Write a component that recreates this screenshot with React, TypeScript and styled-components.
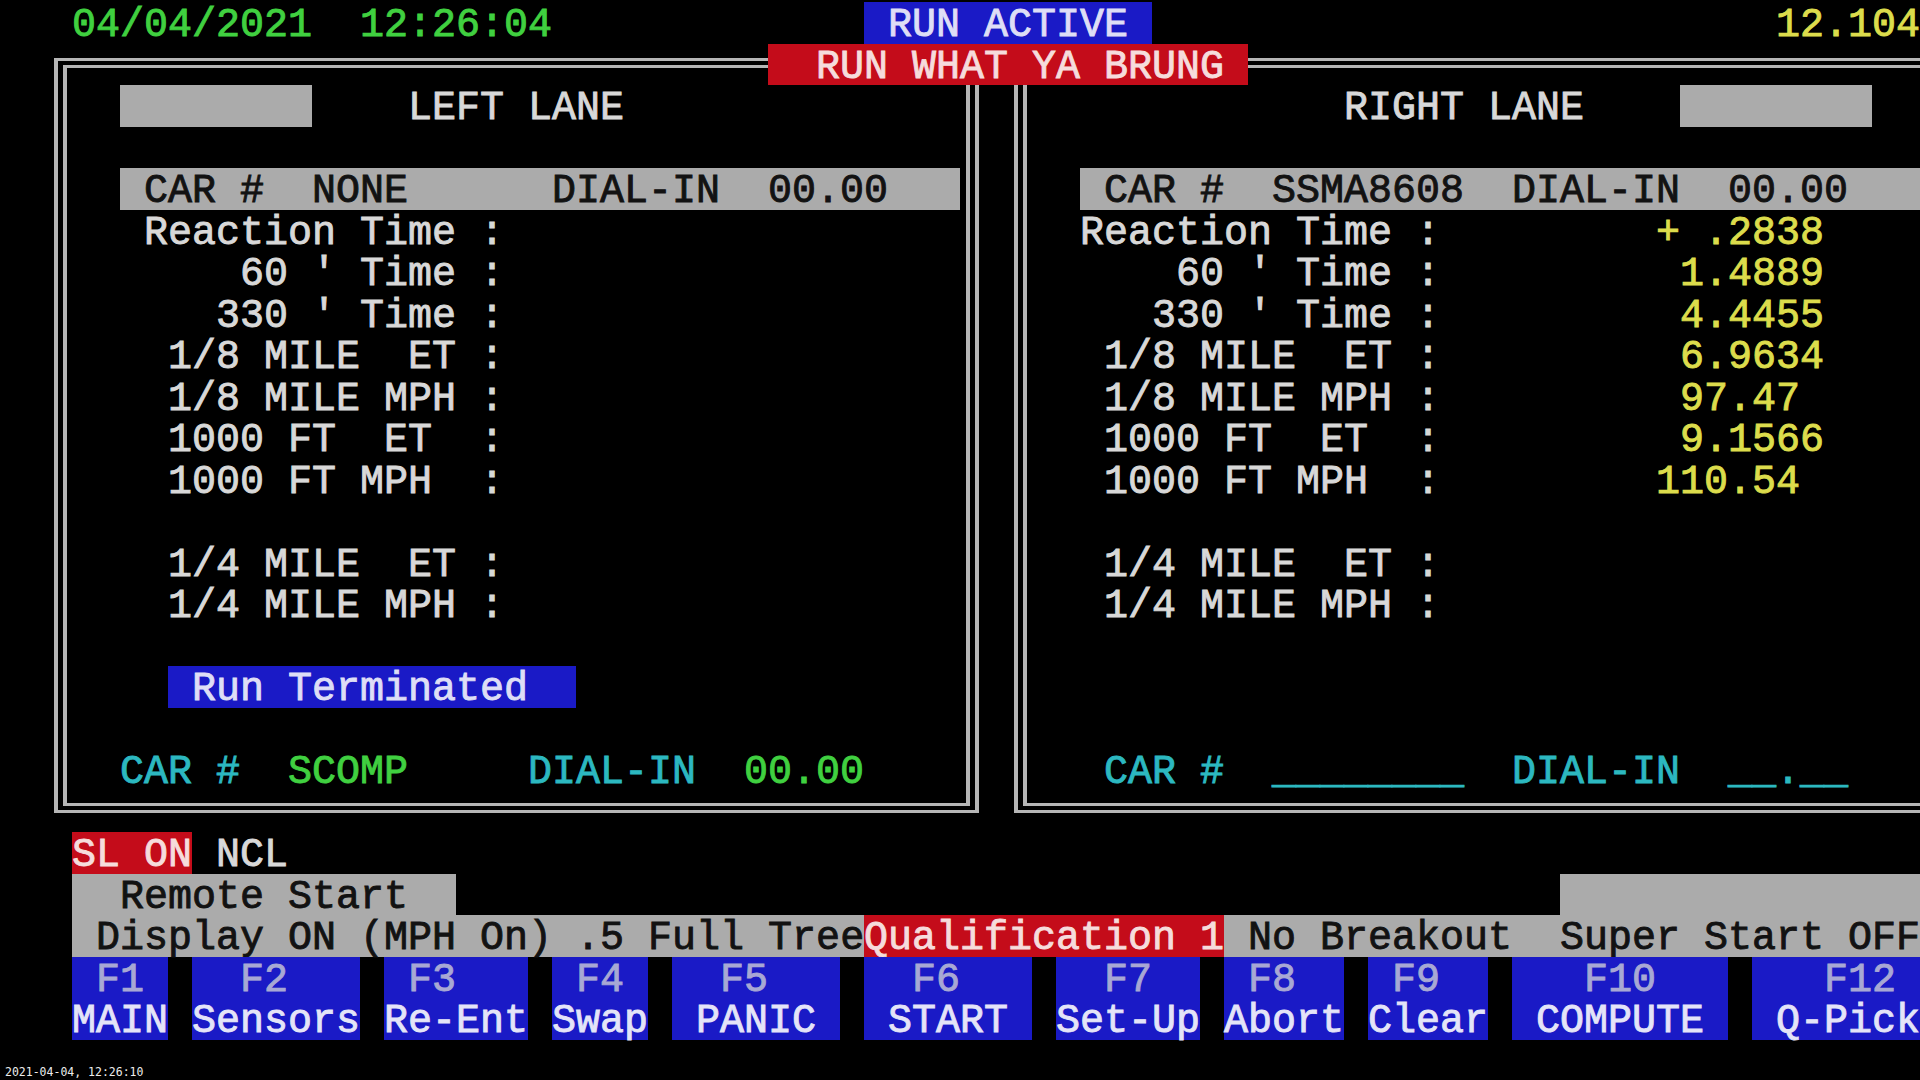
import React from "react";
import styled, { createGlobalStyle, css } from "styled-components";

const GlobalStyle = createGlobalStyle`
  html, body {
    margin: 0;
    padding: 0;
    background: #000;
    overflow: hidden;
  }
  #root {
    width: 1920px;
    height: 1080px;
  }
`;

type Tone = "label" | "green" | "cyan" | "yellow" | "gray" | "blue" | "red";

const FG: Record<Tone, string> = {
  label: "#d8d8d8",
  green: "#40d040",
  cyan: "#2cb8c0",
  yellow: "#dcdc4c",
  gray: "#121212",
  blue: "#dedef6",
  red: "#f6dcdc",
};

const BG: Record<Tone, string> = {
  label: "transparent",
  green: "transparent",
  cyan: "transparent",
  yellow: "transparent",
  gray: "#ababab",
  blue: "#1a1ac6",
  red: "#c40c1a",
};

type Place = { $col: number; $row: number; $span?: number; $rows?: number };

const place = css<Place>`
  grid-column: ${(p) => p.$col + 1} / span ${(p) => p.$span ?? 1};
  grid-row: ${(p) => p.$row + 1} / span ${(p) => p.$rows ?? 1};
`;

const Terminal = styled.main`
  width: 1920px;
  height: 1080px;
  overflow: hidden;
  background: #000;
  display: flex;
  flex-direction: column;
`;

const Screen = styled.div`
  display: grid;
  grid-template-columns: repeat(81, 24px);
  grid-template-rows: repeat(25, 41.5px);
  padding-top: 2px;
  font-family: "Liberation Mono", "DejaVu Sans Mono", monospace;
  font-size: 40px;
  line-height: 41.5px;
  white-space: pre;
  -webkit-text-stroke: 0.9px currentColor;
`;

const Frame = styled.div<Place>`
  ${place};
  margin: 14px 5px 19px 6px;
  border-style: double;
  border-color: #b6b6b6;
  border-width: 10px 13px;
`;

const Text = styled.span<Place & { $tone: Tone }>`
  ${place};
  display: block;
  box-sizing: border-box;
  padding-top: 3px;
  color: ${(p) => FG[p.$tone]};
`;

const Bar = styled.div<Place & { $tone: Tone }>`
  ${place};
  box-sizing: border-box;
  padding-top: 3px;
  color: ${(p) => FG[p.$tone]};
  background: ${(p) => BG[p.$tone]};
`;

const FnKey = styled.div<Place>`
  ${place};
  box-sizing: border-box;
  padding-top: 3px;
  background: ${BG.blue};
  display: grid;
  grid-template-rows: 41.5px 41.5px;
`;

const KeyNum = styled.span`
  color: #a8a8d4;
`;

const KeyName = styled.span`
  color: #e4e4f8;
`;

const Stamp = styled.div`
  margin-top: 25px;
  padding-left: 5px;
  font-family: "DejaVu Sans Mono", monospace;
  font-size: 11.5px;
  line-height: 14px;
  color: #ececec;
  white-space: pre;
`;

const T = ({ col, row, tone, children }: { col: number; row: number; tone: Tone; children: string }) => (
  <Text $col={col} $row={row} $span={children.length} $tone={tone}>
    {children}
  </Text>
);

const B = ({ col, row, tone, children }: { col: number; row: number; tone: Tone; children: string }) => (
  <Bar $col={col} $row={row} $span={children.length} $tone={tone}>
    {children}
  </Bar>
);

const labels: [number, string][] = [
  [5, "Reaction Time :"],
  [6, "    60 ' Time :"],
  [7, "   330 ' Time :"],
  [8, " 1/8 MILE  ET :"],
  [9, " 1/8 MILE MPH :"],
  [10, " 1000 FT  ET  :"],
  [11, " 1000 FT MPH  :"],
  [13, " 1/4 MILE  ET :"],
  [14, " 1/4 MILE MPH :"],
];

const readings: [number, number, string][] = [
  [5, 69, "+ .2838"],
  [6, 70, "1.4889"],
  [7, 70, "4.4455"],
  [8, 70, "6.9634"],
  [9, 70, "97.47"],
  [10, 70, "9.1566"],
  [11, 69, "110.54"],
];

const keys = [
  { col: 3, w: 4, num: " F1", name: "MAIN" },
  { col: 8, w: 7, num: "  F2", name: "Sensors" },
  { col: 16, w: 6, num: " F3", name: "Re-Ent" },
  { col: 23, w: 4, num: " F4", name: "Swap" },
  { col: 28, w: 7, num: "  F5", name: " PANIC" },
  { col: 36, w: 7, num: "  F6", name: " START" },
  { col: 44, w: 6, num: "  F7", name: "Set-Up" },
  { col: 51, w: 5, num: " F8", name: "Abort" },
  { col: 57, w: 5, num: " F9", name: "Clear" },
  { col: 63, w: 9, num: "   F10", name: " COMPUTE" },
  { col: 73, w: 7, num: "   F12", name: " Q-Pick" },
];

export default function App() {
  return (
    <>
      <GlobalStyle />
      <Terminal>
        <Screen>
          <Frame $col={2} $row={1} $span={39} $rows={19} />
          <Frame $col={42} $row={1} $span={39} $rows={19} />

          <T col={3} row={0} tone="green">04/04/2021  12:26:04</T>
          <B col={36} row={0} tone="blue"> RUN ACTIVE </B>
          <T col={74} row={0} tone="yellow">12.104</T>

          <B col={32} row={1} tone="red">  RUN WHAT YA BRUNG </B>

          <B col={5} row={2} tone="gray">{"        "}</B>
          <T col={17} row={2} tone="label">LEFT LANE</T>
          <T col={56} row={2} tone="label">RIGHT LANE</T>
          <B col={70} row={2} tone="gray">{"        "}</B>

          <B col={5} row={4} tone="gray">{" CAR #  NONE      DIAL-IN  00.00   "}</B>
          <B col={45} row={4} tone="gray">{" CAR #  SSMA8608  DIAL-IN  00.00   "}</B>

          {labels.map(([row, text]) => (
            <T key={`l${row}`} col={6} row={row} tone="label">{text}</T>
          ))}
          {labels.map(([row, text]) => (
            <T key={`r${row}`} col={45} row={row} tone="label">{text}</T>
          ))}
          {readings.map(([row, col, text]) => (
            <T key={`v${row}`} col={col} row={row} tone="yellow">{text}</T>
          ))}

          <B col={7} row={16} tone="blue">{" Run Terminated  "}</B>

          <T col={5} row={18} tone="cyan">CAR #</T>
          <T col={12} row={18} tone="green">SCOMP</T>
          <T col={22} row={18} tone="cyan">DIAL-IN</T>
          <T col={31} row={18} tone="green">00.00</T>
          <T col={46} row={18} tone="cyan">CAR #</T>
          <T col={53} row={18} tone="cyan">________</T>
          <T col={63} row={18} tone="cyan">DIAL-IN</T>
          <T col={72} row={18} tone="cyan">__.__</T>

          <B col={3} row={20} tone="red">SL ON</B>
          <T col={9} row={20} tone="label">NCL</T>

          <B col={3} row={21} tone="gray">{"  Remote Start  "}</B>
          <B col={65} row={21} tone="gray">{"               "}</B>

          <B col={3} row={22} tone="gray">{" Display ON (MPH On) .5 Full Tree"}</B>
          <B col={36} row={22} tone="red">Qualification 1</B>
          <B col={51} row={22} tone="gray">{" No Breakout  Super Start OFF"}</B>

          {keys.map((k) => (
            <FnKey key={k.num} $col={k.col} $row={23} $span={k.w} $rows={2}>
              <KeyNum>{k.num}</KeyNum>
              <KeyName>{k.name}</KeyName>
            </FnKey>
          ))}
        </Screen>
        <Stamp>2021-04-04, 12:26:10</Stamp>
      </Terminal>
    </>
  );
}
